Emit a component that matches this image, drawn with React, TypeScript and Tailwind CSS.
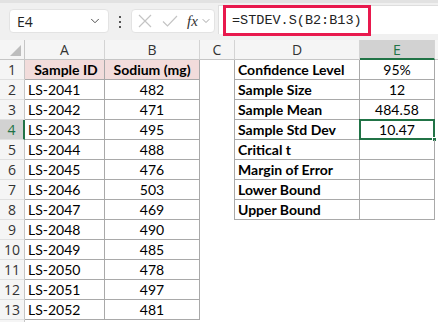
import { ChevronDown } from "lucide-react";

const samples = [
  ["LS-2041", "482"],
  ["LS-2042", "471"],
  ["LS-2043", "495"],
  ["LS-2044", "488"],
  ["LS-2045", "476"],
  ["LS-2046", "503"],
  ["LS-2047", "469"],
  ["LS-2048", "490"],
  ["LS-2049", "485"],
  ["LS-2050", "478"],
  ["LS-2051", "497"],
  ["LS-2052", "481"],
];

const stats = [
  ["Confidence Level", "95%"],
  ["Sample Size", "12"],
  ["Sample Mean", "484.58"],
  ["Sample Std Dev", "10.47"],
  ["Critical t", ""],
  ["Margin of Error", ""],
  ["Lower Bound", ""],
  ["Upper Bound", ""],
];

const cellFont = { fontFamily: "Lato, 'Open Sans', sans-serif" };

function Toolbar() {
  return (
    <div className="relative h-[40px] shrink-0 bg-[#f0f0f0] border-t-[3px] border-[#e2e2e2]">
      {/* name box */}
      <div className="absolute left-[9px] top-[6px] w-[100px] h-[24px] rounded-[4px] bg-white border border-[#e3e3e3] flex items-center pl-[7px] pr-[6px] justify-between">
        <span className="text-[14px] text-[#222]" style={{ fontFamily: "'Open Sans', sans-serif" }}>E4</span>
        <ChevronDown size={14} strokeWidth={1.6} className="text-[#444]" />
      </div>
      {/* dots */}
      <div className="absolute left-[119px] top-[13px] flex flex-col gap-[3px]">
        <span className="w-[2px] h-[2px] bg-[#555]" />
        <span className="w-[2px] h-[2px] bg-[#555]" />
        <span className="w-[2px] h-[2px] bg-[#555]" />
      </div>
      {/* buttons */}
      <div className="absolute left-[131px] top-[6px] w-[84px] h-[24px] rounded-[4px] bg-white border border-[#e3e3e3] flex items-center">
        <svg width="14" height="14" viewBox="0 0 14 14" className="ml-[6px]">
          <path d="M1 1 L13 13 M13 1 L1 13" stroke="#c4c4c4" strokeWidth="1.2" />
        </svg>
        <svg width="16" height="14" viewBox="0 0 16 14" className="ml-[10px]">
          <path d="M1 7.5 L5.5 12 L15 2" stroke="#c4c4c4" strokeWidth="1.2" fill="none" />
        </svg>
        <span className="ml-[9px] text-[15px] italic text-[#333] leading-none" style={{ fontFamily: "'Liberation Serif', serif" }}>fx</span>
        <ChevronDown size={12} strokeWidth={1.5} className="ml-[2px] text-[#888]" />
      </div>
      {/* formula input */}
      <div className="absolute left-[218px] top-[2px] right-0 h-[29px] bg-white border-t border-l border-[#dedede]">
        <div className="absolute left-[4px] -top-[1px] w-[148px] h-[31px] border-[3px] border-[#e8194d]" />
        <span className="absolute left-[13px] top-[5px] text-[13.5px] text-[#222]" style={{ fontFamily: "'Liberation Mono', monospace" }}>
          =STDEV.S(B2:B13)
        </span>
      </div>
    </div>
  );
}

function ColHeader({ label, selected, last }: { label: string; selected?: boolean; last?: boolean }) {
  return (
    <div
      className={`h-[20px] flex items-center justify-center text-[14px] border-b ${last ? "" : "border-r border-r-[#d4d4d4]"} ${
        selected ? "bg-[#d2d2d2] text-[#217346] border-b-2 border-b-[#217346]" : "bg-[#f5f5f5] text-[#333] border-b-[#c6c6c6]"
      }`}
      style={{ fontFamily: "'Open Sans', sans-serif" }}
    >
      {label}
    </div>
  );
}

export default function App() {
  const rows = Array.from({ length: 14 }, (_, i) => i + 1);
  const tb = "border-[#a9a9a9]";

  return (
    <div className="w-[438px] h-[322px] overflow-hidden bg-white flex flex-col">
      <Toolbar />
      <div className="grid grid-cols-[25px_80px_95px_35px_125px_75px_1fr] auto-rows-[20px]" style={cellFont}>
        {/* corner */}
        <div className="relative bg-[#f5f5f5] border-r border-b border-[#c6c6c6]">
          <svg className="absolute right-[3px] bottom-[3px]" width="11" height="11" viewBox="0 0 11 11">
            <path d="M11 0 L11 11 L0 11 Z" fill="#bdbdbd" />
          </svg>
        </div>
        <ColHeader label="A" />
        <ColHeader label="B" />
        <ColHeader label="C" />
        <ColHeader label="D" />
        <ColHeader label="E" selected />
        <ColHeader label="" last />

        {rows.map((r) => {
          const s = r >= 2 && r <= 13 ? samples[r - 2] : null;
          const st = r <= 8 ? stats[r - 1] : null;
          const inA = r <= 13;
          const selRow = r === 4;
          return [
            <div
              key={`h${r}`}
              className={`flex items-center justify-center text-[14px] border-b border-b-[#e0e0e0] ${
                selRow ? "bg-[#d2d2d2] text-[#217346] border-r-2 border-r-[#217346]" : "bg-[#f5f5f5] text-[#333] border-r border-r-[#c6c6c6]"
              }`}
              style={{ fontFamily: "'Open Sans', sans-serif" }}
            >
              {r <= 13 ? r : ""}
            </div>,
            <div
              key={`a${r}`}
              className={`flex items-center pl-[3px] text-[14px] text-black ${inA ? `border-r border-b ${tb}` : ""} ${
                r === 1 ? "bg-[#f2dcdb] font-bold justify-center pl-0" : ""
              }`}
            >
              {r === 1 ? "Sample ID" : s ? s[0] : ""}
            </div>,
            <div
              key={`b${r}`}
              className={`flex items-center justify-center text-[14px] text-black ${inA ? `border-r border-b ${tb}` : ""} ${
                r === 1 ? "bg-[#f2dcdb] font-bold" : ""
              }`}
            >
              {r === 1 ? "Sodium (mg)" : s ? s[1] : ""}
            </div>,
            <div key={`c${r}`} className={st ? `border-r ${tb}` : ""} />,
            <div
              key={`d${r}`}
              className={`flex items-center pl-[3px] text-[14px] font-bold text-black ${st ? `border-r border-b ${tb}` : ""}`}
            >
              {st ? st[0] : ""}
            </div>,
            <div
              key={`e${r}`}
              className={`relative flex items-center justify-center text-[14px] text-black ${st ? `border-r border-b ${tb}` : ""}`}
            >
              {st ? st[1] : ""}
              {selRow && (
                <>
                  <div className="absolute -left-[1px] -top-[1px] right-[-1px] bottom-[-1px] border-2 border-[#217346]" />
                  <div className="absolute right-[-3px] bottom-[-3px] w-[5px] h-[5px] bg-[#217346] border border-white" />
                </>
              )}
            </div>,
            <div key={`f${r}`} />,
          ];
        })}
      </div>
    </div>
  );
}
